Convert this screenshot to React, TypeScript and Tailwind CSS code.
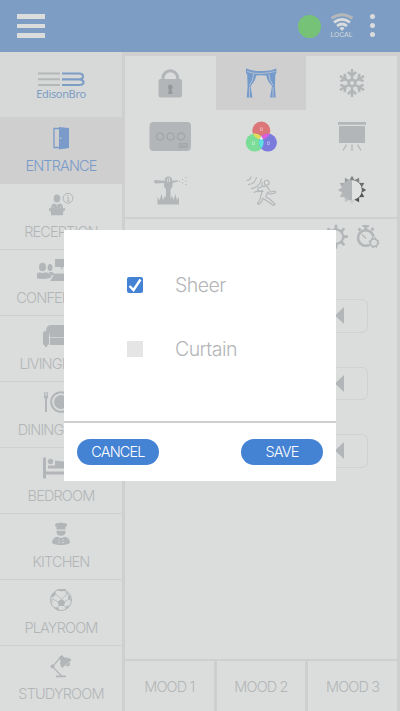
import React from "react";

type IconProps = { box: string; w: number; h: number; children: React.ReactNode };

// Icon artwork keeps one unit equal to one CSS pixel.
function Icon({ box, w, h, children }: IconProps) {
  return (
    <svg viewBox={box} width={w} height={h} fill="currentColor" className="block shrink-0">
      {children}
    </svg>
  );
}

const Door = () => (
  <>
    <path d="M54 128.500h6v19h-6z" fill="none" stroke="currentColor" strokeWidth="1.300" />
    <path d="M59 127l10 1v20l-10 1.500z" />
    <circle cx="60.700" cy="138.300" r=".8" fill="#cfcfcf" />
  </>
);

const Reception = () => (
  <>
    <ellipse cx="57" cy="198.500" rx="3.300" ry="4" />
    <path d="M51 208.800q0-4.800 3-5.300l3 1.300 3-1.300q3 .5 3 5.300z" />
    <path d="M49 208.300h16v2.500H49zM50.500 210.800h13l-.7 4.500h-11.600z" />
    <path d="M52.500 207h1.200M56.400 206.300h1.200M60 207h1.200" stroke="#dbdddc" strokeWidth=".8" />
    <circle cx="68" cy="198.300" r="4.900" fill="none" stroke="currentColor" />
    <path d="M67 197.500h1.300v3.500M66.800 201h2.800M68 195.200v1.200" fill="none" stroke="currentColor" />
  </>
);

const Conference = () => (
  <>
    <ellipse cx="42.500" cy="267" rx="3.500" ry="4.300" />
    <path d="M35 278q0-5 5-5.800l2.500 1 3 -1q5 .8 6 4.800-3 2-9 2-5 0-7.500-1z" />
    <ellipse cx="50" cy="267.500" rx="2.500" ry="3.500" />
    <path d="M48.500 272h3q3.500 1 3.500 3.500h-4z" />
    <path d="M55 259h12v8h-4l-2 3v-3h-6zM55 273.500h14l4 7.500H50z" />
  </>
);

const Sofa = () => (
  <>
    <path d="M46 331q0-6 5-6h21q5 0 5 6h-3q-3 1-3 6H50q0-5-4-6z" />
    <path d="M50 337.700h22v7.300H50z" />
    <rect x="43" y="331" width="6" height="14.500" rx="2.500" />
    <path d="M45 345h2v2h-2z" />
  </>
);

const Dining = () => (
  <>
    <path d="M44 392h.8v4h.7v-4h1v4h.7v-4h.8v5q0 1.500-1 2v13h-2v-13q-1-.5-1-2z" />
    <circle cx="61" cy="402" r="9.800" fill="none" stroke="currentColor" strokeWidth="2" />
    <circle cx="61" cy="402" r="7" />
  </>
);

const Bed = () => (
  <>
    <path d="M43 457.500h3v14h33v7h-3v-4H46v4h-3z" />
    <circle cx="50.500" cy="461.500" r="2.700" />
    <path d="M48 465.500h7v-5l16 2q3 1 3 6H48z" />
  </>
);

const Chef = () => (
  <>
    <path d="M56.500 529.500v-2.500q-2.500-1-1-3 1.500-1.500 3-.7 2.500-1.500 5 0 2-.8 3.200.7 1.200 2-1.200 3v2.500z" />
    <path d="M56.500 530.700h9q.5 5-4.500 5t-4.500-5z" />
    <path d="M52 543q0-5 5-6.200l4 1.200 4-1.200q5 1.200 5 6.200-3 2-9 2t-9-2z" />
    <path d="M58.500 540h1.200M58.500 542.700h1.200M62.500 540h1.200M62.500 542.700h1.200" stroke="#dbdddc" strokeWidth="1.200" />
  </>
);

const Ball = () => (
  <>
    <circle cx="61" cy="600" r="10.500" fill="none" stroke="currentColor" />
    <path d="M61.500 599l3.800 2.700-1.500 4.300h-4.800l-1.500-4.300zM56.500 590l5 1.500 5-1.500-1-1h-7zM52 594l3.700-2.300v3l-4 3.500zM71 601l-2.700-2-.5-4.500 2.200 1.500zM54 607l4 .5 1.500 3-3-.5zM65 609l1.500-3 3-.5-2 3zM64 591l4 2v2z" />
    <path d="M57.500 601.500l-5-2.500M65 601.500l4-2.500M59 605.500l-2 3M63.500 605.500l3 2M55.500 594l3 2.500 3 2.500M67.500 594l-6 5M52 599v4" fill="none" stroke="currentColor" strokeWidth=".8" />
  </>
);

const Lamp = () => (
  <>
    <path d="M60 658l-7.500 8.500 9.500 10" fill="none" stroke="currentColor" strokeWidth="1.200" />
    <circle cx="52.500" cy="666.500" r="1.900" />
    <path d="M59 657l3-2 2.300 2.500q5.500-.5 7.200 2.500l-9.500 8q-2.500-3-1.500-7.500zM56 675.500h10v1.700H56z" />
    <path d="M65.500 665.500l4-3.500q1.500 3-1 4.200-1.500.5-3-.7z" />
  </>
);

const rooms = [
  { name: "ENTRANCE", icon: <Door /> },
  { name: "RECEPTION", icon: <Reception /> },
  { name: "CONFERENCE", icon: <Conference /> },
  { name: "LIVINGROOM", icon: <Sofa /> },
  { name: "DININGROOM", icon: <Dining /> },
  { name: "BEDROOM", icon: <Bed /> },
  { name: "KITCHEN", icon: <Chef /> },
  { name: "PLAYROOM", icon: <Ball /> },
  { name: "STUDYROOM", icon: <Lamp /> },
];

const Lock = () => (
  <>
    <path d="M163 80v-2a7.300 7.300 0 0 1 14.600 0v2" fill="none" stroke="currentColor" strokeWidth="3" />
    <rect x="158.500" y="79" width="23.500" height="18.500" rx="2" />
    <path d="M170.300 84.500a2.600 2.600 0 0 1 1.300 4.800l1 4.700h-4.600l1-4.700a2.600 2.600 0 0 1 1.300-4.800z" fill="#96999b" />
  </>
);

const Curtains = () => (
  <>
    <path d="M246 68.500q7 3 15.300 2.500 8.300.5 15-2.500v5q-7 2.500-15 1.800-8.300.7-15.300-1.800z" />
    <path d="M247 71h9q1.500 8-5.500 15l2 11.500h-5.700l.8-11.500zM275.500 71h-9q-1.500 8 5.500 15l-2 11.500h5.700l-.8-11.500z" />
    <path d="M247 71.500q7 2.500 14.300 2t14-2M253.500 74q0 6-4 11.500M249.500 87v10M269 74q0 6 4 11.500M273 87v10" fill="none" stroke="#cfcfcf" strokeWidth=".7" />
  </>
);

const Snowflake = () => (
  <>
    {[0, 60, 120, 180, 240, 300].map((angle) => (
      <path
        key={angle}
        d="M352 80V69M347.800 72l4.200 3.600 4.200-3.600"
        fill="none"
        stroke="currentColor"
        strokeWidth="2.500"
        transform={`rotate(${angle} 352 83)`}
      />
    ))}
    <circle cx="352" cy="83" r="3.300" fill="none" stroke="currentColor" strokeWidth="2.600" />
  </>
);

const SwitchPlate = () => (
  <>
    <rect x="149.500" y="122" width="41.500" height="29" rx="4" />
    <g fill="none" stroke="#9b9ea0" strokeWidth=".9">
      <circle cx="160" cy="136.500" r="3.700" />
      <circle cx="170.500" cy="136.500" r="3.700" />
      <circle cx="181" cy="136.500" r="3.700" />
      <path d="M179 143.500h8.500v1.500H179zM179 146.200h8.500v1.500H179z" strokeWidth=".6" />
    </g>
  </>
);

const Rgb = () => (
  <>
    <defs>
      <clipPath id="red"><circle cx="261.300" cy="130.500" r="9" /></clipPath>
      <clipPath id="green"><circle cx="254.700" cy="142.600" r="9" /></clipPath>
    </defs>
    <circle cx="261.300" cy="130.500" r="9" fill="#dc7678" />
    <circle cx="254.700" cy="142.600" r="9" fill="#7bdd98" />
    <circle cx="267.900" cy="142.600" r="9" fill="#7b7bdd" />
    <circle cx="254.700" cy="142.600" r="9" fill="#e2dc59" clipPath="url(#red)" />
    <circle cx="267.900" cy="142.600" r="9" fill="#e05ddd" clipPath="url(#red)" />
    <g clipPath="url(#green)">
      <circle cx="267.900" cy="142.600" r="9" fill="#5de0e0" />
      <circle cx="267.900" cy="142.600" r="9" fill="#f1f1e8" clipPath="url(#red)" />
    </g>
    <g fill="none" stroke="#ffffff77" strokeWidth=".8">
      <rect x="260.300" y="128" width="2" height="2.500" />
      <rect x="252.500" y="142" width="2" height="2.500" />
      <rect x="267.500" y="142" width="2" height="2.500" />
    </g>
  </>
);

const Projector = () => (
  <>
    <path d="M338 122h28v2.700h-28zM339 126h26v17h-26z" />
    <path d="M346.500 144.500l-3.500 6M352 144.500v6.500M357.500 144.500l3.500 6" stroke="currentColor" strokeWidth="1.200" />
  </>
);

const Sprinkler = () => (
  <>
    <path d="M154.500 180q-1 3 1 3.500l8.500-.5v3.500l2 3v14h4.500v-14l2-3v-3.500l5.500-1.500v-1.200l-6 .5v-2q-1-2.500-3.600-2.500t-3.600 2.500v2z" />
    <path d="M157.500 204.500v-8l2 4 2-6.500 1.500 6 2-4 2 3h3l2-3 1.500 4 2-6 1.500 6 2-3v7.500z" />
    <path d="M167.700 182v-3.500q.9-1.500 1.800 0v3.500" stroke="#dbdddc" strokeWidth=".8" fill="none" />
    <path d="M179 181.500h1.200M182 179.500h1.200M182 183h1.200M185.300 177.500h1.200M185.300 181h1.200M185.300 184.500h1.200" stroke="currentColor" strokeWidth="1.200" />
  </>
);

const Motion = () => (
  <g fill="none" stroke="currentColor" strokeWidth="1.100" strokeLinejoin="round">
    <path d="M246.500 180.500q4.500-.5 4.500-4M248 184.500q7.500-.5 8.500-7.500M251 188.500q9-1 10.500-10M253.500 192.500l4-1.500 6 .5M262 182v5" />
    <circle cx="266.700" cy="182.700" r="2.400" />
    <path d="M258 188l6-2q3.500 0 4.500 2.500l2 3.500 4.500-1 .6 1.700-5.600 1.500-2.500-2-1.700 4.500 3.700 2.300 5.500 5-1.400 1.500-6.600-4.500-4.300-2.700q-.8 4.500-4.300 6.200l-.9-1.700q2.500-1.700 3.300-7l1.700-5.300-4.500 1.300z" />
  </g>
);

const tones = ["#828486", "#808284", "#6c6e70", "#5d5f61", "#555759", "#515355", "#cbcdce", "#c0c2c3", "#b6b8ba", "#b4b6b8", "#a9abad", "#999b9d"];

const Brightness = () => (
  <>
    {tones.map((tone, i) => (
      <path key={tone} d="M352 175.800l3 5h-6z" fill={tone} transform={`rotate(${i * 30} 352 190)`} />
    ))}
    <circle cx="352" cy="190" r="9.800" fill="#e0e2e2" />
    <path d="M352 179.700v20.600a10.300 10.300 0 0 1 0-20.600z" />
  </>
);

const devices = [
  { id: "lock", icon: <Lock />, box: "146 64 48 38" },
  { id: "curtain", icon: <Curtains />, box: "237 64 48 38" },
  { id: "ac", icon: <Snowflake />, box: "328 64 48 38" },
  { id: "plate", icon: <SwitchPlate />, box: "146 117 48 38" },
  { id: "rgb", icon: <Rgb />, box: "237 117 48 38" },
  { id: "projector", icon: <Projector />, box: "328 117 48 38" },
  { id: "sprinkler", icon: <Sprinkler />, box: "146 171 48 38" },
  { id: "motion", icon: <Motion />, box: "237 171 48 38" },
  { id: "dimmer", icon: <Brightness />, box: "328 171 48 38" },
];

function Toolbar() {
  return (
    <Icon box="321 222 62 30" w={62} h={30}>
      <circle cx="336" cy="236.700" r="7.200" fill="none" stroke="currentColor" strokeWidth="2.200" />
      {[0, 45, 90, 135, 180, 225, 270, 315].map((a) => (
        <path key={a} d="M334.300 229.500l.6-4.800h2.200l.6 4.800z" transform={`rotate(${a} 336 236.700)`} />
      ))}
      <circle cx="365.800" cy="238" r="7.800" fill="none" stroke="currentColor" strokeWidth="2.600" />
      <path d="M362.500 225h6.500v2h-1.700v3h-3.100v-3h-1.700zM357.500 229.500l2 -2 2 2-2 2zM370.500 229l2-1.700 2 2-2 2z" />
      <path d="M362 234.500l4 4" stroke="currentColor" strokeWidth="1.300" />
      <circle cx="374" cy="242.700" r="5.500" fill="#dbdddc" />
      <circle cx="374" cy="242.700" r="3.700" fill="none" stroke="currentColor" strokeWidth="1.600" />
      <circle cx="374" cy="242.700" r="4.700" fill="none" stroke="currentColor" strokeWidth="1.500" strokeDasharray="1.800 1.890" />
    </Icon>
  );
}

function Header() {
  return (
    <header className="flex h-[52px] shrink-0 items-center justify-between bg-[#7d9dc5] pr-[25px] pl-[17px]">
      <div className="flex flex-col gap-[5px]">
        <div className="h-[4.500px] w-7 bg-[#dbdddc]" />
        <div className="h-[4.500px] w-7 bg-[#dbdddc]" />
        <div className="h-[4.500px] w-7 bg-[#dbdddc]" />
      </div>
      <div className="flex items-center text-[#dbdddc]">
        <div className="size-[23px] rounded-full bg-[#76c277]" />
        <div className="flex w-[41px] flex-col items-center pb-px">
          <Icon box="329 14 24 18" w={24} h={18}>
            <g fill="none" stroke="currentColor" strokeWidth="2.700">
              <path d="M330.500 19.300q10.500-7.200 21 0" stroke="#b5b7b9" strokeWidth="3" />
              <path d="M333 23.300q8-6 16 0M336 27q5-4 10 0" />
            </g>
            <path d="M338.500 29q2.500-1.800 5 0l-2.500 3z" />
          </Icon>
          <span className="text-[6.800px] leading-[7px]">LOCAL</span>
        </div>
        <div className="flex w-[13px] flex-col items-end gap-[4.500px] pb-px">
          <div className="size-[4.800px] rounded-full bg-[#dbdddc]" />
          <div className="size-[4.800px] rounded-full bg-[#dbdddc]" />
          <div className="size-[4.800px] rounded-full bg-[#dbdddc]" />
        </div>
      </div>
    </header>
  );
}

function Sidebar() {
  return (
    <aside className="w-[122px] shrink-0 text-[#b3b6b8]">
      <div className="flex h-[66px] flex-col items-center border-b border-[#cfd1d1] bg-[#d6d9d8] pt-[19px]">
        <Icon box="37 71 48 17" w={48} h={17}>
          <path d="M38 73.500h22M38 79.300h22M38 85h22" stroke="#b5b8b8" strokeWidth="2" />
          <path d="M62 73.500h17q4 0 4 3t-4 2.800H62M79 79.300q4.500.2 4.500 3t-4.500 2.700H62" fill="none" stroke="#7d9dc5" strokeWidth="2.200" />
        </Icon>
        <span className="font-['Noto_Sans',sans-serif] text-[11px] leading-3 tracking-[-0.350px] text-[#7d9dc5]">EdisonBro</span>
      </div>
      {rooms.map((room, i) => (
        <div
          key={room.name}
          className={`flex h-[66px] flex-col items-center border-b-[1.500px] border-[#cfd1d1] pt-[6px] ${i === 0 ? "bg-[#cfcfcf] text-[#7a9bc9]" : ""}`}
        >
          <Icon box={`37 ${124 + i * 66} 48 28`} w={48} h={28}>{room.icon}</Icon>
          <span className="mt-[3.500px] text-[14.500px] leading-5 font-light tracking-[-0.850px] whitespace-nowrap">{room.name}</span>
        </div>
      ))}
    </aside>
  );
}

function Dialog() {
  return (
    <div className="absolute top-[230px] left-[64px] flex h-[251px] w-[272px] flex-col bg-white text-[#b3b5b7]">
      <div className="flex flex-1 flex-col gap-[40px] pt-[42.500px] pl-[63px]">
        <label className="flex h-6 items-center gap-8">
          <svg viewBox="0 0 16 16" className="size-4">
            <rect width="16" height="16" rx="2" fill="#4482d3" />
            <path d="M2.500 9l4 4L13.500 2.500" fill="none" stroke="white" strokeWidth="2.400" />
          </svg>
          <span className="text-[19.500px] leading-6 font-light tracking-[-0.550px]">Sheer</span>
        </label>
        <label className="flex h-6 items-center gap-8">
          <span className="size-4 bg-[#e5e5e5]" />
          <span className="text-[19.500px] leading-6 font-light tracking-[-0.550px]">Curtain</span>
        </label>
      </div>
      <div className="flex h-[60px] items-center justify-between border-t-2 border-[#cfcfcf] px-[13px] text-[14.500px] font-light tracking-[-0.850px] text-white">
        <button className="h-[26px] w-[82px] rounded-full bg-[#4482d3]">CANCEL</button>
        <button className="h-[26px] w-[82px] rounded-full bg-[#4482d3]">SAVE</button>
      </div>
    </div>
  );
}

export default function App() {
  return (
    <div className="relative flex h-[711px] w-[400px] flex-col overflow-hidden bg-[#dbdddc] font-[Inter,'Liberation_Sans',sans-serif]">
      <Header />
      <div className="flex min-h-0 flex-1">
        <Sidebar />
        <main className="flex min-w-0 flex-1 flex-col border-x-[3px] border-t-[4px] border-[#cfcfcf] text-[#b3b6b8]">
          <div className="grid h-[161px] shrink-0 grid-cols-3 grid-rows-3">
            {devices.map((d, i) => (
              <div key={d.id} className={`flex items-center justify-center ${i === 1 ? "bg-[#cfcfcf] text-[#759bcc]" : ""}`}>
                <Icon box={d.box} w={48} h={38}>{d.icon}</Icon>
              </div>
            ))}
          </div>
          <div className="flex flex-1 flex-col border-y-[2px] border-[#cfcfcf] pt-[3px]">
            <div className="flex justify-end pr-[14px]"><Toolbar /></div>
            <div className="mt-[47px] mr-[29px] ml-[29px] flex flex-col gap-[34px]">
              {[0, 1, 2].map((n) => (
                <div key={n} className="flex h-[33.500px] items-center justify-end rounded-md border border-[#d0d2d2] pr-[23px]">
                  <svg width="9" height="17" viewBox="0 0 9 17" fill="currentColor"><path d="M9 0v17L0 8.500z" /></svg>
                </div>
              ))}
            </div>
          </div>
          <div className="grid h-[50px] shrink-0 grid-cols-3 gap-[3px] bg-[#cfcfcf] text-[14.500px] font-light tracking-[-0.850px]">
            {["MOOD 1", "MOOD 2", "MOOD 3"].map((mood) => (
              <button key={mood} className="bg-[#dbdddc] pt-[2px]">{mood}</button>
            ))}
          </div>
        </main>
      </div>
      <Dialog />
    </div>
  );
}
